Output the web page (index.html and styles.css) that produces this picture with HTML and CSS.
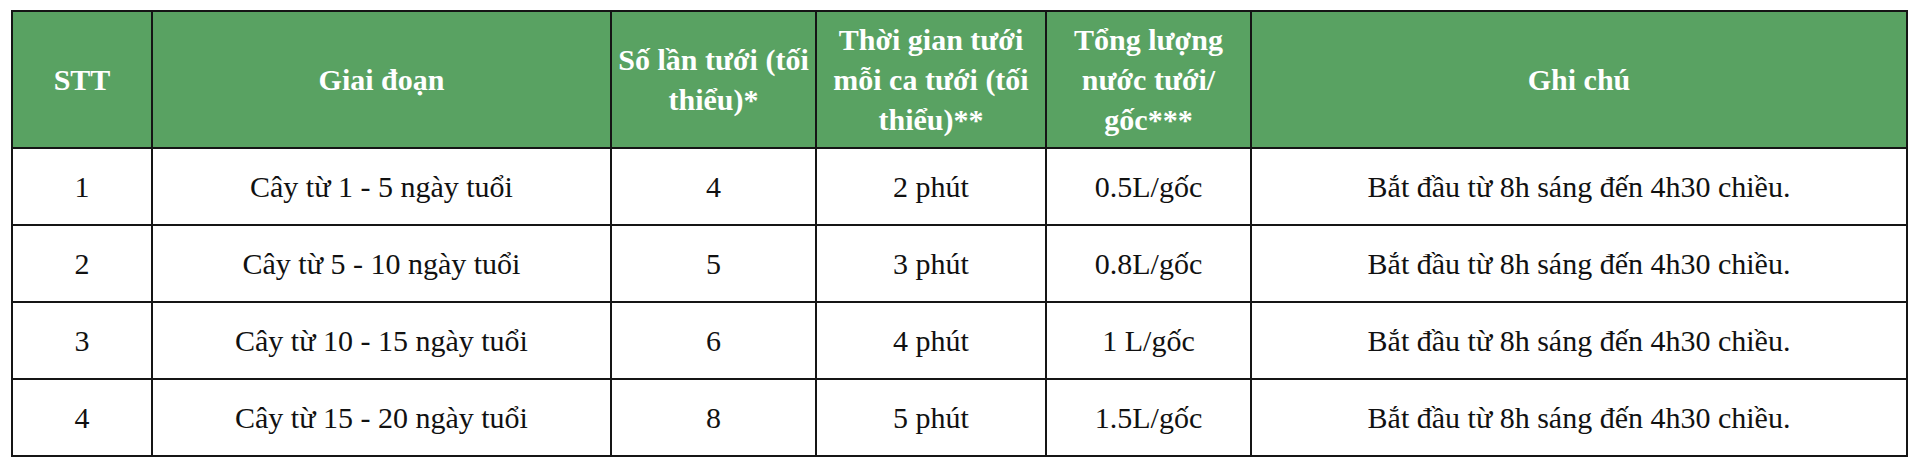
FILE: index.html
```html
<!DOCTYPE html>
<html lang="vi">
<head>
<meta charset="utf-8">
<title>Lịch tưới</title>
<link rel="stylesheet" href="styles.css">
</head>
<body>
<table class="schedule">
  <colgroup>
    <col class="c-stt">
    <col class="c-stage">
    <col class="c-count">
    <col class="c-time">
    <col class="c-water">
    <col class="c-note">
  </colgroup>
  <thead>
    <tr>
      <th>STT</th>
      <th>Giai đoạn</th>
      <th>Số lần tưới (tối thiểu)*</th>
      <th>Thời gian tưới mỗi ca tưới (tối thiểu)**</th>
      <th>Tổng lượng nước tưới/ gốc***</th>
      <th>Ghi chú</th>
    </tr>
  </thead>
  <tbody>
    <tr>
      <td>1</td>
      <td>Cây từ 1 - 5 ngày tuổi</td>
      <td>4</td>
      <td>2 phút</td>
      <td>0.5L/gốc</td>
      <td>Bắt đầu từ 8h sáng đến 4h30 chiều.</td>
    </tr>
    <tr>
      <td>2</td>
      <td>Cây từ 5 - 10 ngày tuổi</td>
      <td>5</td>
      <td>3 phút</td>
      <td>0.8L/gốc</td>
      <td>Bắt đầu từ 8h sáng đến 4h30 chiều.</td>
    </tr>
    <tr>
      <td>3</td>
      <td>Cây từ 10 - 15 ngày tuổi</td>
      <td>6</td>
      <td>4 phút</td>
      <td>1 L/gốc</td>
      <td>Bắt đầu từ 8h sáng đến 4h30 chiều.</td>
    </tr>
    <tr>
      <td>4</td>
      <td>Cây từ 15 - 20 ngày tuổi</td>
      <td>8</td>
      <td>5 phút</td>
      <td>1.5L/gốc</td>
      <td>Bắt đầu từ 8h sáng đến 4h30 chiều.</td>
    </tr>
  </tbody>
</table>
</body>
</html>
```

FILE: styles.css
```css
html, body {
  margin: 0;
  padding: 0;
  background: #ffffff;
}

body {
  font-family: "Liberation Serif", "Times New Roman", serif;
  color: #111111;
}

.schedule {
  margin: 10px 0 0 11px;
  width: 1897px;
  border-collapse: collapse;
  table-layout: fixed;
}

.c-stt { width: 140px; }
.c-stage { width: 459px; }
.c-count { width: 205px; }
.c-time { width: 230px; }
.c-water { width: 205px; }
.c-note { width: 656px; }

.schedule th,
.schedule td {
  border: 2px solid #151515;
  text-align: center;
  vertical-align: middle;
  padding: 0 6px;
}

.schedule th {
  background: #59a262;
  color: #ffffff;
  font-weight: bold;
  font-size: 30px;
  line-height: 40px;
  height: 135px;
}

.schedule td {
  font-size: 30px;
  line-height: 34px;
  height: 75px;
}
```
